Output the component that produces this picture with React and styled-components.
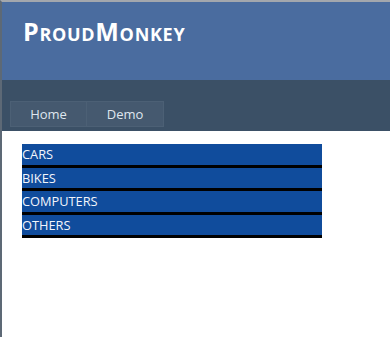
import styled, { createGlobalStyle } from "styled-components"

const GlobalStyle = createGlobalStyle`
    html, body {
        margin: 0;
        padding: 0;
        background: #ffffff;
    }
    body {
        font-family: "Open Sans", "Noto Sans", "DejaVu Sans", sans-serif;
    }
`

const Page = styled.div`
    min-height: 337px;
    box-sizing: border-box;
    border-top: 2px solid #a3a7ad;
    border-left: 2px solid #5d6976;
    background: #ffffff;
`

const Header = styled.header`
    height: 78px;
    background: #4a6c9f;
    box-sizing: border-box;
    padding: 12px 0 0 21px;
`

const Title = styled.h1`
    margin: 0;
    font-size: 25px;
    font-weight: 700;
    font-variant: small-caps;
    color: #ffffff;
    letter-spacing: 0.7px;
`

const Nav = styled.nav`
    height: 51px;
    background: #3b5066;
    box-sizing: border-box;
    padding: 21px 0 0 8px;
`

const Tabs = styled.ul`
    display: flex;
    margin: 0;
    padding: 0;
    list-style: none;
`

const Tab = styled.li`
    width: 77px;
    height: 26px;
    box-sizing: border-box;
    border: 1px solid #4c6075;
    border-left-width: ${(p) => (p.first ? "1px" : "0")};
    background: #45596f;
    color: #dfe6ee;
    font-size: 13px;
    line-height: 24px;
    text-align: center;
`

const Content = styled.main`
    padding: 13px 20px;
`

const List = styled.ul`
    width: 300px;
    margin: 0;
    padding: 0;
    list-style: none;
`

const Item = styled.li`
    height: 20.5px;
    background: #104c9c;
    border-bottom: 3px solid #000000;
    color: #f2f5fb;
    font-size: 12.8px;
    line-height: 21px;
    padding: 0;
`

const categories = ["CARS", "BIKES", "COMPUTERS", "OTHERS"]

function App() {
    return (
        <Page>
            <GlobalStyle />
            <Header>
                <Title>ProudMonkey</Title>
            </Header>
            <Nav>
                <Tabs>
                    <Tab first>Home</Tab>
                    <Tab>Demo</Tab>
                </Tabs>
            </Nav>
            <Content>
                <List>
                    {categories.map((c) => (
                        <Item key={c}>{c}</Item>
                    ))}
                </List>
            </Content>
        </Page>
    )
}

export default App
